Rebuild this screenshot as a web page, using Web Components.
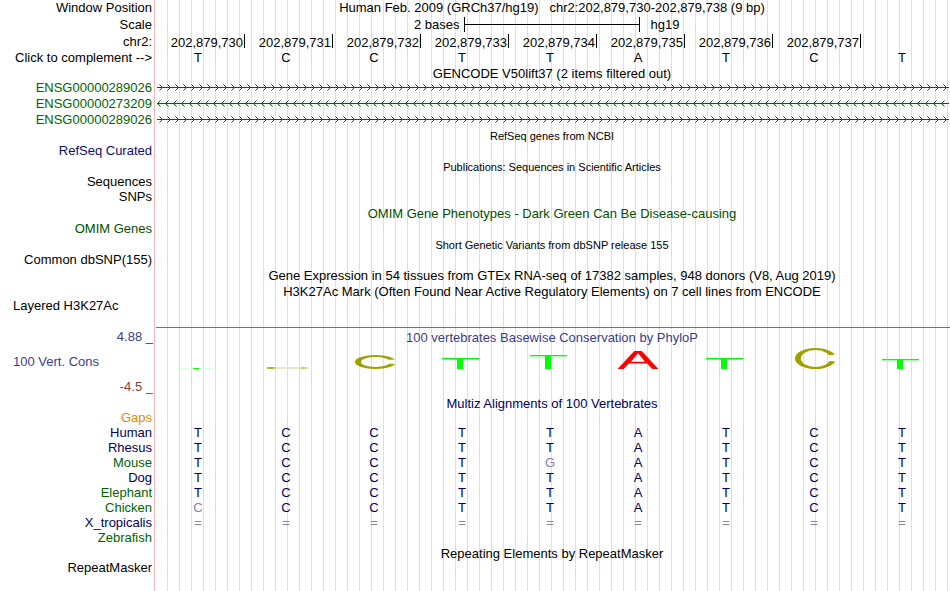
<!DOCTYPE html>
<html lang="en">
<head>
<meta charset="utf-8">
<title>Genome Browser</title>
<style>
    body {
        margin: 0;
        background: #fff;
        color: #000;
        font: 13px/15px "Liberation Sans", Arial, sans-serif;
    }
</style>
</head>
<body>
<genome-image></genome-image>

<script>
// Sheet of tracks: side labels, red divider and blue guide lines
class GenomeImage extends HTMLElement {
    constructor() {
        super();
        this.attachShadow({ mode: 'open' });
        this.shadowRoot.innerHTML = `
            <style>
                :host {
                    display: block;
                    min-height: 100vh;
                    overflow: hidden;
                    background:
                        linear-gradient(#fff, #fff) 0 0 / 154px 100% no-repeat,
                        linear-gradient(#ffb4b4, #ffb4b4) 154px 0 / 1px 100% no-repeat,
                        linear-gradient(#fff, #fff) 155px 0 / 11px 100% no-repeat,
                        linear-gradient(to right, #dcdcfa 1px, transparent 1px) 11px 0 / 12px 100%;
                }
                button {
                    all: unset;
                    cursor: pointer;
                }
                .tall { --row: 18px; }
                .mid { --row: 16px; }
                .green { --label: #006400; }
                .omim { --label: #005000; }
                .navy { --label: #000064; }
                .blue { --label: #0c0c78; }
                .gaps { --label: #e68a00; }
                .layered { --row: 28px; }
                hr {
                    height: 1px;
                    margin: 0 0 1px 156px;
                    border: 0;
                    background: #3c9664;
                }
            </style>

            <track-row class="mid"><span slot="label">Window Position</span><track-title flush>Human Feb. 2009 (GRCh37/hg19) &nbsp; chr2:202,879,730-202,879,738 (9 bp)</track-title></track-row>
            <track-row class="tall"><span slot="label">Scale</span><scale-bar><span slot="size">2 bases</span><span slot="assembly">hg19</span></scale-bar></track-row>
            <track-row class="mid"><span slot="label">chr2:</span><position-ruler start="202879730" count="8"></position-ruler></track-row>
            <track-row><button slot="label" type="button">Click to complement --&gt;</button><base-row bases="TCCTTATCT"></base-row></track-row>

            <track-title inset>GENCODE V50lift37 (2 items filtered out)</track-title>
            <track-row class="mid green"><span slot="label">ENSG00000289026</span><gene-strand strand="+"></gene-strand></track-row>
            <track-row class="mid green"><span slot="label">ENSG00000273209</span><gene-strand strand="-"></gene-strand></track-row>
            <track-row class="mid green"><span slot="label">ENSG00000289026</span><gene-strand strand="+"></gene-strand></track-row>

            <track-title inset small>RefSeq genes from NCBI</track-title>
            <track-row class="blue"><span slot="label">RefSeq Curated</span></track-row>
            <track-title inset small class="mid">Publications: Sequences in Scientific Articles</track-title>
            <track-row><span slot="label">Sequences</span></track-row>
            <track-row class="mid"><span slot="label">SNPs</span></track-row>
            <track-title inset class="mid omim">OMIM Gene Phenotypes - Dark Green Can Be Disease-causing</track-title>
            <track-row class="omim"><span slot="label">OMIM Genes</span></track-row>
            <track-title inset small class="mid">Short Genetic Variants from dbSNP release 155</track-title>
            <track-row><span slot="label">Common dbSNP(155)</span></track-row>
            <track-title inset class="mid">Gene Expression in 54 tissues from GTEx RNA-seq of 17382 samples, 948 donors (V8, Aug 2019)</track-title>
            <track-title inset class="mid">H3K27Ac Mark (Often Found Near Active Regulatory Elements) on 7 cell lines from ENCODE</track-title>
            <track-row class="layered" start><span slot="label">Layered H3K27Ac</span></track-row>
            <hr>
            <conservation-track max="4.88" min="-4.5" name="100 Vert. Cons"
                scores="T:1 C:2 C:14 T:11 T:14 A:18 T:11 C:21 T:10">100 vertebrates Basewise Conservation by PhyloP</conservation-track>

            <track-title inset class="navy">Multiz Alignments of 100 Vertebrates</track-title>
            <track-row class="gaps"><span slot="label">Gaps</span></track-row>
            <track-row class="navy"><span slot="label">Human</span><base-row bases="TCCTTATCT"></base-row></track-row>
            <track-row class="navy"><span slot="label">Rhesus</span><base-row bases="TCCTTATCT"></base-row></track-row>
            <track-row class="green"><span slot="label">Mouse</span><base-row bases="TCCTgATCT"></base-row></track-row>
            <track-row class="navy"><span slot="label">Dog</span><base-row bases="TCCTTATCT"></base-row></track-row>
            <track-row class="green"><span slot="label">Elephant</span><base-row bases="TCCTTATCT"></base-row></track-row>
            <track-row class="green"><span slot="label">Chicken</span><base-row bases="cCCTTATCT"></base-row></track-row>
            <track-row class="navy"><span slot="label">X_tropicalis</span><base-row bases="========="></base-row></track-row>
            <track-row class="green"><span slot="label">Zebrafish</span></track-row>

            <track-title inset>Repeating Elements by RepeatMasker</track-title>
            <track-row><span slot="label">RepeatMasker</span></track-row>
        `;
    }
}

// One row: label on the left, data on the right
class TrackRow extends HTMLElement {
    constructor() {
        super();
        this.attachShadow({ mode: 'open' });
        this.shadowRoot.innerHTML = `
            <style>
                :host {
                    display: grid;
                    grid-template-columns: 154px minmax(0, 1fr);
                    height: var(--row, 15px);
                    line-height: var(--row, 15px);
                }
                .label {
                    padding-right: 2px;
                    color: var(--label, #000);
                    text-align: right;
                    white-space: nowrap;
                }
                :host([start]) .label {
                    padding-left: 13px;
                    line-height: 14px;
                    text-align: left;
                }
            </style>
            <div class="label"><slot name="label"></slot></div>
            <div class="data"><slot></slot></div>
        `;
    }
}

// Centred caption above a track
class TrackTitle extends HTMLElement {
    constructor() {
        super();
        this.attachShadow({ mode: 'open' });
        this.shadowRoot.innerHTML = `
            <style>
                :host {
                    display: block;
                    box-sizing: border-box;
                    height: var(--row, 15px);
                    padding-top: 1px;
                    color: var(--label, #000);
                    line-height: var(--row, 15px);
                    text-align: center;
                    white-space: nowrap;
                }
                :host([flush]) { padding-top: 0; }
                :host([inset]) { margin-left: 154px; }
                :host([small]) { font-size: 11px; }
            </style>
            <slot></slot>
        `;
    }
}

class ScaleBar extends HTMLElement {
    constructor() {
        super();
        this.attachShadow({ mode: 'open' });
        this.shadowRoot.innerHTML = `
            <style>
                :host {
                    display: grid;
                    grid-template-columns: 7fr 4fr 7fr;
                    align-items: center;
                    height: 17px;
                    line-height: 17px;
                }
                .size { padding-right: 4px; text-align: right; }
                .assembly { padding-left: 10px; }
                .bar {
                    height: 15px;
                    border: solid #000;
                    border-width: 0 1px;
                    background: linear-gradient(#000, #000) 0 7px / 100% 1px no-repeat;
                }
            </style>
            <div class="size"><slot name="size"></slot></div>
            <div class="bar"></div>
            <div class="assembly"><slot name="assembly"></slot></div>
        `;
    }
}

// Coordinates with a tick at the end of each base
class PositionRuler extends HTMLElement {
    constructor() {
        super();
        this.attachShadow({ mode: 'open' });
        this.shadowRoot.innerHTML = `
            <style>
                :host {
                    display: grid;
                    grid-template-columns: repeat(9, minmax(0, 1fr));
                    padding: 0 1px 0 3px;
                }
                span {
                    height: 14px;
                    padding-right: 1px;
                    border-right: 1px solid #000;
                    line-height: 17px;
                    text-align: right;
                    white-space: nowrap;
                }
            </style>
        `;
    }

    connectedCallback() {
        const start = Number(this.getAttribute('start'));
        const count = Number(this.getAttribute('count'));
        for (let i = 0; i < count; i++) {
            const tick = document.createElement('span');
            tick.textContent = (start + i).toLocaleString('en-US');
            this.shadowRoot.appendChild(tick);
        }
    }
}

// Bases of one species; lower case and "=" are drawn dimmed
class BaseRow extends HTMLElement {
    constructor() {
        super();
        this.attachShadow({ mode: 'open' });
        this.shadowRoot.innerHTML = `
            <style>
                :host {
                    display: grid;
                    grid-template-columns: repeat(9, minmax(0, 1fr));
                    padding-right: 4px;
                    color: var(--base, #000);
                    text-align: center;
                }
                .dim { color: #8282b4; }
            </style>
        `;
    }

    connectedCallback() {
        if (this.parentNode.className) {
            this.style.setProperty('--base', '#000064');
        }
        for (const base of this.getAttribute('bases')) {
            const cell = document.createElement('span');
            cell.textContent = base.toUpperCase();
            if (base === '=' || base !== base.toUpperCase()) {
                cell.className = 'dim';
            }
            this.shadowRoot.appendChild(cell);
        }
    }
}

// Intron line with strand arrows
class GeneStrand extends HTMLElement {
    constructor() {
        super();
        this.attachShadow({ mode: 'open' });
    }

    connectedCallback() {
        const forward = this.getAttribute('strand') === '+';
        const arrow = forward ? 'M2.5 .5l3 3-3 3' : 'M3.5 .5l-3 3 3 3';
        this.shadowRoot.innerHTML = `
            <style>
                :host {
                    display: block;
                    height: 16px;
                    padding: 4px 1px 0 3px;
                    box-sizing: border-box;
                }
                svg { display: block; width: 100%; height: 7px; }
            </style>
            <svg aria-hidden="true">
                <defs>
                    <pattern id="arrow" width="8" height="7" patternUnits="userSpaceOnUse">
                        <path d="${arrow}" fill="none" stroke="#006400"/>
                    </pattern>
                </defs>
                <rect width="100%" height="7" fill="url(#arrow)"/>
                <rect y="3" width="100%" height="1" fill="#006400"/>
            </svg>
        `;
    }
}

// Conservation graph: one mark per base, its height is the score
class ConservationTrack extends HTMLElement {
    constructor() {
        super();
        this.attachShadow({ mode: 'open' });
        this.shadowRoot.innerHTML = `
            <style>
                :host {
                    display: grid;
                    grid-template-columns: 154px minmax(0, 1fr);
                    height: 66px;
                    color: #3c3c8c;
                    line-height: 16px;
                }
                .axis {
                    display: flex;
                    flex-direction: column;
                    justify-content: space-between;
                    padding: 0 1px 0 13px;
                    text-align: right;
                }
                .name { text-align: left; }
                .min { color: #8c3c3c; }
                .title { line-height: 18px; text-align: center; white-space: nowrap; }
                .marks {
                    display: grid;
                    grid-template-columns: repeat(9, minmax(0, 1fr));
                    align-items: end;
                    justify-items: center;
                    height: 22px;
                    padding-right: 4px;
                }
                .mark { box-sizing: border-box; width: 41px; }
                .T {
                    width: 37px;
                    margin-right: 4px;
                    background:
                        linear-gradient(#00ff00, #00ff00) 50% 0 / 6px 100% no-repeat,
                        linear-gradient(#00ff00 50%, #a0ffa0 50%) 0 0 / 100% 2px no-repeat;
                }
                .C {
                    margin-left: 3px;
                    border: solid #a0a000;
                    border-width: 2px 6px;
                    border-radius: 50%;
                    clip-path: polygon(0 0, 100% 0, 100% 32%, 70% 36%, 70% 60%, 100% 64%, 100% 100%, 0 100%);
                }
                .A {
                    background: #ff0000;
                    clip-path: polygon(evenodd, 0 100%, 41% 0, 59% 0, 100% 100%, 85% 100%, 72% 70%, 28% 70%, 15% 100%, 0 100%, 33% 60%, 67% 60%, 50% 13%, 33% 60%, 0 100%);
                }
                .flat.T {
                    background:
                        linear-gradient(#00ff00, #00ff00) 50% 0 / 6px 100% no-repeat,
                        #e0ffe0;
                }
                .flat.C {
                    border: 0;
                    border-radius: 0;
                    background: linear-gradient(to right, #b4b43c 0 15%, #e6e6c8 22% 78%, #c8c864 88%, #e6e6c8);
                    clip-path: none;
                }
            </style>
            <div class="axis"><div class="max"></div><div class="name"></div><div class="min"></div></div>
            <div>
                <div class="title"><slot></slot></div>
                <div class="marks"></div>
            </div>
        `;
    }

    connectedCallback() {
        const root = this.shadowRoot;
        root.querySelector('.max').textContent = this.getAttribute('max') + ' _';
        root.querySelector('.min').textContent = this.getAttribute('min') + ' _';
        root.querySelector('.name').textContent = this.getAttribute('name');
        for (const item of this.getAttribute('scores').split(/\s+/)) {
            const [base, height] = item.split(':');
            const mark = document.createElement('div');
            mark.className = 'mark ' + base + (height < 3 ? ' flat' : '');
            mark.style.height = height + 'px';
            root.querySelector('.marks').appendChild(mark);
        }
    }
}

customElements.define('genome-image', GenomeImage);
customElements.define('track-row', TrackRow);
customElements.define('track-title', TrackTitle);
customElements.define('scale-bar', ScaleBar);
customElements.define('position-ruler', PositionRuler);
customElements.define('base-row', BaseRow);
customElements.define('gene-strand', GeneStrand);
customElements.define('conservation-track', ConservationTrack);
</script>
</body>
</html>
